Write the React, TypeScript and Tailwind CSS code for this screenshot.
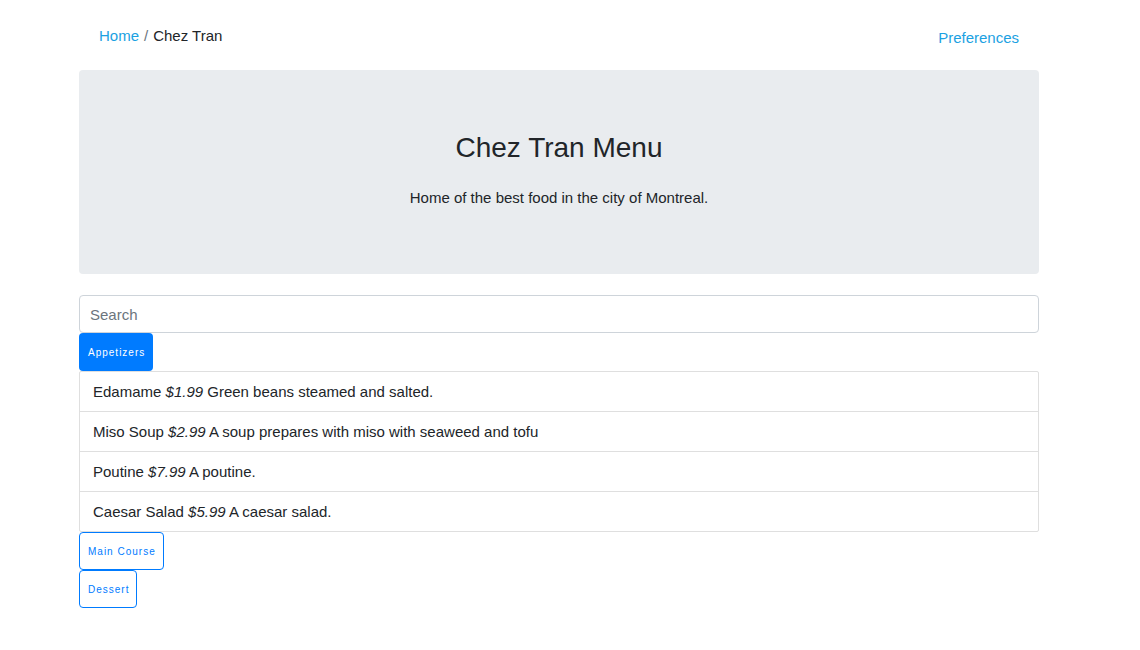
import React from "react";

const items = [
  { name: "Edamame", price: "$1.99", desc: "Green beans steamed and salted." },
  { name: "Miso Soup", price: "$2.99", desc: "A soup prepares with miso with seaweed and tofu" },
  { name: "Poutine", price: "$7.99", desc: "A poutine." },
  { name: "Caesar Salad", price: "$5.99", desc: "A caesar salad." },
];

export default function App() {
  return (
    <div className="min-h-screen bg-white font-['Liberation_Sans',Arial,sans-serif] text-[15px] text-[#212529]">
      <div className="w-[960px] ml-[79px]">
        {/* header */}
        <div className="flex justify-between px-5 h-[70px]">
          <div className="pt-[25px] leading-[22px]">
            <a className="text-[#1ba1e2]">Home</a>
            <span className="text-[#6c757d] px-[5px]">/</span>
            <span>Chez Tran</span>
          </div>
          <div className="pt-[27px] leading-[22px]">
            <a className="text-[#1ba1e2]">Preferences</a>
          </div>
        </div>

        {/* jumbotron */}
        <div className="bg-[#e9ecef] rounded-[4px] h-[204px] pt-[61px] flex flex-col items-center">
          <h1 className="text-[28px] leading-[34px]">Chez Tran Menu</h1>
          <p className="mt-[22px] leading-[22px]">Home of the best food in the city of Montreal.</p>
        </div>

        {/* search */}
        <div className="mt-[21px]">
          <input
            type="text"
            placeholder="Search"
            className="w-full h-[38px] border border-[#ced4da] rounded-[4px] px-[10px] text-[15px] outline-none placeholder:text-[#6c757d]"
          />
        </div>

        <button className="h-[38px] pl-[9px] pr-[8px] bg-[#007bff] text-white text-[10px] font-medium tracking-[1px] rounded-[4px]">
          Appetizers
        </button>

        <div className="border border-[#dfdfdf] rounded-[2px]">
          {items.map((it, i) => (
            <div
              key={it.name}
              className={`flex items-center px-[13px] pt-[1px] ${i === 0 ? "h-[39px]" : "h-10 border-t border-[#dfdfdf]"}`}
            >
              <span>
                {it.name} <em>{it.price}</em> {it.desc}
              </span>
            </div>
          ))}
        </div>

        <div className="flex flex-col items-start">
          <button className="h-[38px] pl-[8px] pr-[7px] border border-[#007bff] text-[#007bff] text-[10px] tracking-[1px] rounded-[4px]">
            Main Course
          </button>
          <button className="h-[38px] pl-[8px] pr-[7px] border border-[#007bff] text-[#007bff] text-[10px] tracking-[1px] rounded-[4px]">
            Dessert
          </button>
        </div>
      </div>
    </div>
  );
}
